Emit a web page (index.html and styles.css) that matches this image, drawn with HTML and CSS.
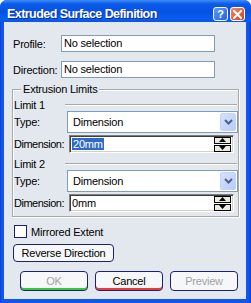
FILE: index.html
```html
<!DOCTYPE html>
<html lang="en">
<head>
  <meta charset="UTF-8">
  <title>Extruded Surface Definition</title>
  <link rel="stylesheet" href="styles.css">
</head>
<body>
  <div class="window">
    <div class="titlebar">
      <span class="title">Extruded Surface Definition</span>
      <span class="cap-btn help">?</span>
      <span class="cap-btn close">
        <svg width="9" height="9" viewBox="0 0 9 9"><path d="M1 1 L8 8 M8 1 L1 8" stroke="#fff" stroke-width="2" stroke-linecap="square"/></svg>
      </span>
    </div>

    <div class="client">
      <div class="row">
        <span class="lbl">Profile:</span>
        <div class="field">No selection</div>
      </div>
      <div class="row second">
        <span class="lbl">Direction:</span>
        <div class="field">No selection</div>
      </div>

      <fieldset class="group">
        <legend>Extrusion Limits</legend>

        <div class="limit"><span>Limit 1</span><span class="rule"></span></div>
        <div class="row">
          <span class="lbl-type">Type:</span>
          <div class="combo">
            <span>Dimension</span>
            <span class="drop"><svg width="9" height="6" viewBox="0 0 9 6"><path d="M1 1 L4.5 4.5 L8 1" fill="none" stroke="#4d6185" stroke-width="2"/></svg></span>
          </div>
        </div>
        <div class="row dimrow">
          <span class="lbl-dim">Dimension:</span>
          <div class="spin">
            <span class="val"><span class="sel">20mm</span></span>
            <span class="arrows">
              <span class="arr"><svg width="7" height="4" viewBox="0 0 7 4"><path d="M0 4 L3.5 0 L7 4Z" fill="#000"/></svg></span>
              <span class="arr"><svg width="7" height="4" viewBox="0 0 7 4"><path d="M0 0 L3.5 4 L7 0Z" fill="#000"/></svg></span>
            </span>
          </div>
        </div>

        <div class="limit limit2"><span>Limit 2</span><span class="rule"></span></div>
        <div class="row">
          <span class="lbl-type">Type:</span>
          <div class="combo">
            <span>Dimension</span>
            <span class="drop"><svg width="9" height="6" viewBox="0 0 9 6"><path d="M1 1 L4.5 4.5 L8 1" fill="none" stroke="#4d6185" stroke-width="2"/></svg></span>
          </div>
        </div>
        <div class="row dimrow">
          <span class="lbl-dim">Dimension:</span>
          <div class="spin">
            <span class="val">0mm</span>
            <span class="arrows">
              <span class="arr"><svg width="7" height="4" viewBox="0 0 7 4"><path d="M0 4 L3.5 0 L7 4Z" fill="#000"/></svg></span>
              <span class="arr"><svg width="7" height="4" viewBox="0 0 7 4"><path d="M0 0 L3.5 4 L7 0Z" fill="#000"/></svg></span>
            </span>
          </div>
        </div>
      </fieldset>

      <div class="check"><span class="box"></span>Mirrored Extent</div>
      <div><span class="btn reverse">Reverse Direction</span></div>

      <div class="actions">
        <span class="btn ok">OK</span>
        <span class="btn cancel">Cancel</span>
        <span class="btn preview">Preview</span>
      </div>
    </div>
  </div>
</body>
</html>
```

FILE: styles.css
```css
* {
  box-sizing: border-box;
}
body {
  margin: 0;
  background: #fff;
  font-family: "Liberation Sans", Arial, sans-serif;
  font-size: 11px;
  letter-spacing: -0.2px;
  color: #000;
}
.window {
  width: 251px;
  height: 303px;
  display: flex;
  flex-direction: column;
  background: linear-gradient(to right, #0a3fd8 0, #1257ea 2px, #1257ea 248px, #0a3fd8 251px);
  border-radius: 7px 7px 0 0;
  overflow: hidden;
}
.titlebar {
  height: 22px;
  display: flex;
  align-items: flex-start;
  padding: 7px 6px 0 7px;
  background: linear-gradient(to bottom, #3d8df6 0, #0b5ae9 4px, #0552e6 12px, #0a5ef0 19px, #0a55e4 22px);
}
.title {
  flex: 1;
  color: #fff;
  font-weight: bold;
  font-size: 12.5px;
  letter-spacing: -0.55px;
  line-height: 14px;
  text-shadow: 1px 1px #0a2a9a;
}
.cap-btn {
  width: 15px;
  height: 14px;
  border: 1px solid #fff;
  border-radius: 3px;
  display: flex;
  align-items: center;
  justify-content: center;
  color: #fff;
  font-weight: bold;
  font-size: 11px;
  line-height: 1;
}
.help {
  background: linear-gradient(to bottom right, #5d9bff, #2463e3);
  margin-right: 2px;
}
.close {
  background: linear-gradient(to bottom right, #f08a6a, #d4401a);
}
.client {
  flex: 1;
  margin: 0 5px 4px 4px;
  background: #e3e8ee;
  padding: 13px 0 0 9px;
}
.row {
  display: flex;
  align-items: center;
}
.second {
  margin-top: 9px;
}
.lbl {
  width: 48px;
}
.field {
  width: 154px;
  height: 17px;
  background: #fff;
  border: 1px solid #7f9db9;
  padding-left: 2px;
  line-height: 15px;
}
.group {
  margin: 5px 0 0 -1px;
  width: 227px;
  padding: 3px 0 4px 1px;
  border: 1px solid #a7a9a8;
  box-shadow: inset 1px 1px #fff, 1px 1px #fff;
}
.group legend {
  margin-left: 7px;
  padding: 0 2px;
  background: #e3e8ee;
  line-height: 13px;
}
.limit {
  display: flex;
  align-items: center;
  height: 12px;
}
.limit2 {
  margin-top: 5px;
}
.limit .rule {
  margin-left: 20px;
  flex: 1;
  margin-right: 1px;
  height: 2px;
  border-top: 1px solid #a7a9a8;
  border-bottom: 1px solid #fff;
}
.lbl-type {
  width: 53px;
}
.combo {
  width: 171px;
  height: 22px;
  background: #fff;
  border: 1px solid #7f9db9;
  display: flex;
  align-items: center;
  padding: 1px 1px 1px 5px;
}
.combo span:first-child {
  flex: 1;
}
.drop {
  width: 16px;
  height: 18px;
  border-radius: 2px;
  background: linear-gradient(to bottom right, #d6e2fd, #b7cbf8);
  border: 1px solid #c3d3fb;
  display: flex;
  align-items: center;
  justify-content: center;
}
.dimrow {
  margin-top: 2px;
}
.lbl-dim {
  width: 55px;
  letter-spacing: -0.5px;
}
.spin {
  width: 165px;
  height: 18px;
  background: #fff;
  border: 1px solid;
  border-color: #808080 #fff #fff #808080;
  box-shadow: inset 1px 1px #404040, inset -1px -1px #d4d0c8;
  display: flex;
  align-items: center;
  padding: 0 1px 0 2px;
}
.val {
  flex: 1;
}
.sel {
  background: #316ac5;
  color: #fff;
  padding: 0 1px;
}
.arrows {
  display: flex;
  flex-direction: column;
  gap: 1px;
  margin-right: 1px;
}
.arr {
  width: 17px;
  height: 7px;
  background: #ece9e1;
  border: 1px solid #000;
  display: flex;
  align-items: center;
  justify-content: center;
}
.check {
  display: flex;
  align-items: center;
  margin: 8px 0 0 1px;
  height: 13px;
}
.box {
  width: 13px;
  height: 13px;
  background: #fff;
  border: 1px solid #1c2170;
  margin-right: 4px;
}
.btn {
  display: inline-flex;
  align-items: center;
  justify-content: center;
  background: #f6f7f8;
  border: 1px solid #1c2170;
  border-radius: 4px;
}
.reverse {
  margin-top: 6px;
  width: 101px;
  height: 18px;
}
.actions {
  display: flex;
  gap: 7px;
  margin: 9px 0 0 7px;
}
.actions .btn {
  width: 68px;
  height: 20px;
}
.ok {
  color: #a2a2a2;
  box-shadow: inset 0 -2px #2ccc3a;
}
.cancel {
  box-shadow: inset 0 -2px #ec3a3a;
}
.preview {
  color: #a2a2a2;
}
```
